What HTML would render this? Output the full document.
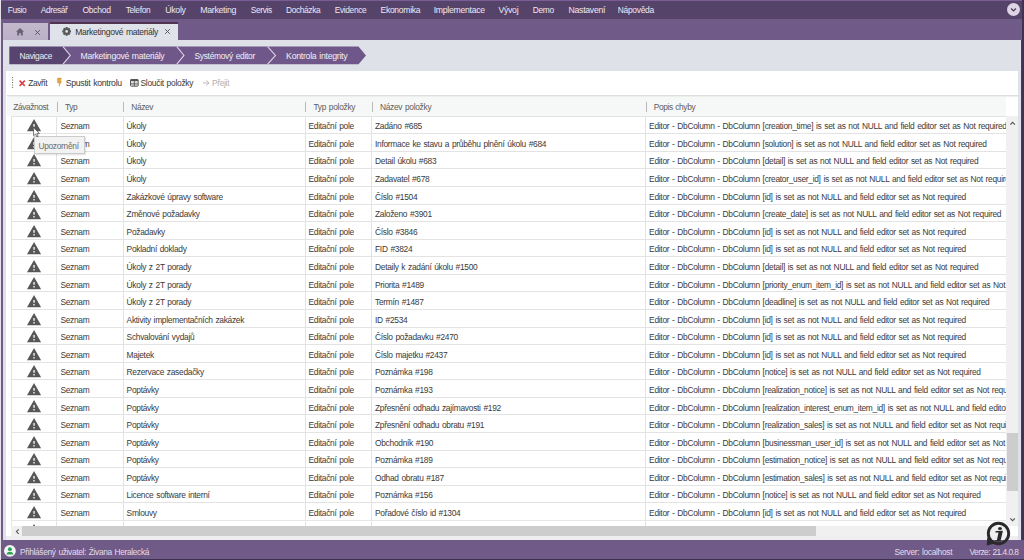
<!DOCTYPE html>
<html><head><meta charset="utf-8"><style>
*{margin:0;padding:0;box-sizing:border-box}
html,body{width:1024px;height:560px;overflow:hidden}
body{position:relative;background:#dee1e8;font-family:"Liberation Sans",sans-serif}
.t{position:absolute;white-space:nowrap;line-height:12px}
.r{position:absolute}
svg{position:absolute;overflow:visible}
</style></head>
<body>
<div class="r" style="left:0.00px;top:0.00px;width:1024.00px;height:560.00px;background:#dee1e8;"></div>
<div class="r" style="left:0.00px;top:0.00px;width:1024.00px;height:1.20px;background:#7a5d96;"></div>
<div class="r" style="left:0.00px;top:1.20px;width:1024.00px;height:17.60px;background:#56436a;"></div>
<div class="r" style="left:0.00px;top:18.80px;width:1024.00px;height:21.50px;background:#705a87;"></div>
<div class="r" style="left:0.00px;top:40.30px;width:3.30px;height:500.20px;background:#705a87;"></div>
<div class="r" style="left:1021.10px;top:40.30px;width:2.90px;height:500.20px;background:#4a3a5e;"></div>
<div class="r" style="left:1022.20px;top:0.00px;width:1.80px;height:560.00px;background:#3f3252;"></div>
<div class="r" style="left:0.00px;top:540.20px;width:1024.00px;height:19.80px;background:#705a87;"></div>
<div class="r" style="left:0.00px;top:558.60px;width:1024.00px;height:1.40px;background:#3e3050;"></div>
<div class="r" style="left:0.00px;top:0.00px;width:1.20px;height:560.00px;background:#e4e2e8;"></div>
<div class="t" style="left:7.75px;top:4px;font-size:8.35px;letter-spacing:-0.349px;word-spacing:0.7px;color:#eee8f2;">Fusio</div>
<div class="t" style="left:40.75px;top:4px;font-size:8.35px;letter-spacing:-0.349px;word-spacing:0.7px;color:#eee8f2;">Adresář</div>
<div class="t" style="left:82.50px;top:4px;font-size:8.57px;letter-spacing:-0.286px;word-spacing:0.7px;color:#eee8f2;">Obchod</div>
<div class="t" style="left:125.75px;top:4px;font-size:8.35px;letter-spacing:-0.349px;word-spacing:0.7px;color:#eee8f2;">Telefon</div>
<div class="t" style="left:165.25px;top:4px;font-size:8.76px;letter-spacing:-0.290px;word-spacing:0.7px;color:#eee8f2;">Úkoly</div>
<div class="t" style="left:200.25px;top:4px;font-size:8.76px;letter-spacing:-0.290px;word-spacing:0.7px;color:#eee8f2;">Marketing</div>
<div class="t" style="left:250.75px;top:4px;font-size:8.35px;letter-spacing:-0.349px;word-spacing:0.7px;color:#eee8f2;">Servis</div>
<div class="t" style="left:286.00px;top:4px;font-size:8.35px;letter-spacing:-0.349px;word-spacing:0.7px;color:#eee8f2;">Docházka</div>
<div class="t" style="left:334.75px;top:4px;font-size:8.35px;letter-spacing:-0.349px;word-spacing:0.7px;color:#eee8f2;">Evidence</div>
<div class="t" style="left:380.50px;top:4px;font-size:8.56px;letter-spacing:-0.286px;word-spacing:0.7px;color:#eee8f2;">Ekonomika</div>
<div class="t" style="left:433.75px;top:4px;font-size:8.68px;letter-spacing:-0.288px;word-spacing:0.7px;color:#eee8f2;">Implementace</div>
<div class="t" style="left:498.50px;top:4px;font-size:8.68px;letter-spacing:-0.288px;word-spacing:0.7px;color:#eee8f2;">Vývoj</div>
<div class="t" style="left:532.75px;top:4px;font-size:8.35px;letter-spacing:-0.282px;word-spacing:0.7px;color:#eee8f2;">Demo</div>
<div class="t" style="left:568.50px;top:4px;font-size:8.72px;letter-spacing:-0.289px;word-spacing:0.7px;color:#eee8f2;">Nastavení</div>
<div class="t" style="left:617.75px;top:4px;font-size:8.44px;letter-spacing:-0.283px;word-spacing:0.7px;color:#eee8f2;">Nápověda</div>
<svg style="left:1007px;top:3px" width="13" height="13" viewBox="0 0 13 13"><circle cx="6.5" cy="6.5" r="6.5" fill="#ddd5e5"/><path d="M4.1 5.5 L6.5 7.9 L8.9 5.5" fill="none" stroke="#4a3d5c" stroke-width="1.3"/></svg>
<div class="r" style="left:3.40px;top:22.80px;width:44.70px;height:17.50px;background:linear-gradient(#c3b9cd,#b9b1c6);"></div>
<svg style="left:16.2px;top:28.4px" width="8" height="7.6" viewBox="0 0 8 7.6"><path d="M4 0 L8 3.8 L6.8 3.8 L6.8 7.6 L4.9 7.6 L4.9 5.3 L3.1 5.3 L3.1 7.6 L1.2 7.6 L1.2 3.8 L0 3.8 Z" fill="#676470"/></svg>
<svg style="left:34px;top:29px" width="7" height="7" viewBox="0 0 7 7"><path d="M1.2 1.2 L5.8 5.8 M5.8 1.2 L1.2 5.8" stroke="#57545c" stroke-width="0.95"/></svg>
<div class="r" style="left:49.80px;top:21.50px;width:128.60px;height:2.00px;background:#4f3450;"></div>
<div class="r" style="left:49.80px;top:23.50px;width:128.60px;height:16.80px;background:#dfe2e8;"></div>
<svg style="left:62.1px;top:27.1px" width="9.3" height="8.8" viewBox="-5 -4.75 10 9.5"><g fill="#575757"><circle r="3.5"/><rect x="-1.15" y="-4.7" width="2.3" height="2.2" rx="0.3" transform="rotate(0)"/><rect x="-1.15" y="-4.7" width="2.3" height="2.2" rx="0.3" transform="rotate(45)"/><rect x="-1.15" y="-4.7" width="2.3" height="2.2" rx="0.3" transform="rotate(90)"/><rect x="-1.15" y="-4.7" width="2.3" height="2.2" rx="0.3" transform="rotate(135)"/><rect x="-1.15" y="-4.7" width="2.3" height="2.2" rx="0.3" transform="rotate(180)"/><rect x="-1.15" y="-4.7" width="2.3" height="2.2" rx="0.3" transform="rotate(225)"/><rect x="-1.15" y="-4.7" width="2.3" height="2.2" rx="0.3" transform="rotate(270)"/><rect x="-1.15" y="-4.7" width="2.3" height="2.2" rx="0.3" transform="rotate(315)"/></g><circle r="1.5" fill="#dfe2e8"/></svg>
<div class="t" style="left:75.25px;top:26px;font-size:8.56px;letter-spacing:-0.286px;word-spacing:0.7px;color:#333;">Marketingové materiály</div>
<svg style="left:164px;top:28px" width="7" height="7" viewBox="0 0 7 7"><path d="M1.2 1.2 L5.8 5.8 M5.8 1.2 L1.2 5.8" stroke="#555" stroke-width="0.95"/></svg>
<svg style="left:0;top:0" width="1024" height="70" viewBox="0 0 1024 70"><polygon points="9.3,46.6 63,46.6 70.3,55.400000000000006 63,64.2 9.3,64.2" fill="#574570"/><polygon points="63,46.6 176.8,46.6 184,55.400000000000006 176.8,64.2 63,64.2 70.3,55.400000000000006" fill="#6f5889"/><polygon points="176.8,46.6 267.6,46.6 275.5,55.400000000000006 267.6,64.2 176.8,64.2 184.0,55.400000000000006" fill="#6f5889"/><polygon points="267.6,46.6 358.5,46.6 366,55.400000000000006 358.5,64.2 267.6,64.2 275.5,55.400000000000006" fill="#6f5889"/><polyline points="63,46.6 70.3,55.400000000000006 63,64.2" fill="none" stroke="#d9cfe4" stroke-width="1.1"/><polyline points="176.8,46.6 184,55.400000000000006 176.8,64.2" fill="none" stroke="#d9cfe4" stroke-width="1.1"/><polyline points="267.6,46.6 275.5,55.400000000000006 267.6,64.2" fill="none" stroke="#d9cfe4" stroke-width="1.1"/></svg>
<div class="t" style="left:19.50px;top:50px;font-size:8.40px;letter-spacing:-0.283px;word-spacing:0.7px;color:#f2eef6;">Navigace</div>
<div class="t" style="left:80.50px;top:50px;font-size:8.66px;letter-spacing:-0.288px;word-spacing:0.7px;color:#f2eef6;">Marketingové materiály</div>
<div class="t" style="left:194.50px;top:50px;font-size:8.40px;letter-spacing:-0.283px;word-spacing:0.7px;color:#f2eef6;">Systémový editor</div>
<div class="t" style="left:286.10px;top:50px;font-size:8.77px;letter-spacing:-0.290px;word-spacing:0.7px;color:#f2eef6;">Kontrola integrity</div>
<div class="r" style="left:5.50px;top:70.90px;width:1012.80px;height:467.60px;background:#ffffff;"></div>
<div class="r" style="left:5.50px;top:536.00px;width:1012.80px;height:4.20px;background:#eeeef0;"></div>
<div class="r" style="left:6.90px;top:94.80px;width:1011.30px;height:2.60px;background:linear-gradient(#d6d6d6,#f4f5f5);"></div>
<svg style="left:11.8px;top:76.8px" width="1.2" height="11.2" viewBox="0 0 1.2 11.2"><rect x="0" y="0" width="1.1" height="1.1" fill="#777"/><rect x="0" y="2.5" width="1.1" height="1.1" fill="#777"/><rect x="0" y="5" width="1.1" height="1.1" fill="#777"/><rect x="0" y="7.5" width="1.1" height="1.1" fill="#777"/><rect x="0" y="10" width="1.1" height="1.1" fill="#777"/></svg>
<svg style="left:18.8px;top:79.7px" width="6.4" height="6.5" viewBox="0 0 6.4 6.5"><path d="M0.6 0.6 L5.8 5.9 M5.8 0.6 L0.6 5.9" stroke="#d8404a" stroke-width="1.5"/></svg>
<div class="t" style="left:28.20px;top:77px;font-size:8.35px;letter-spacing:-0.393px;word-spacing:0.7px;color:#3a3a3a;">Zavřít</div>
<svg style="left:56.7px;top:77.9px" width="4.8" height="8.6" viewBox="0 0 4.8 8.6"><path d="M0.3 0 L4.5 0 L3.5 3 L4.7 3 L2 8.6 L2.2 4.9 L0.4 4.9 Z" fill="#dfa545" stroke="#c98f30" stroke-width="0.3"/></svg>
<div class="t" style="left:65.70px;top:77px;font-size:8.72px;letter-spacing:-0.289px;word-spacing:0.7px;color:#3a3a3a;">Spustit kontrolu</div>
<svg style="left:129.8px;top:78.8px" width="8.7" height="7.7" viewBox="0 0 8.7 7.7"><rect x="0.5" y="0.5" width="7.7" height="6.7" rx="0.8" fill="#e4e4e4" stroke="#555" stroke-width="1"/><rect x="0.5" y="0.5" width="7.7" height="1.6" fill="#555"/><path d="M4.35 1 V7 M0.8 4.9 H7.9" stroke="#555" stroke-width="0.9"/></svg>
<div class="t" style="left:140.50px;top:77px;font-size:8.45px;letter-spacing:-0.284px;word-spacing:0.7px;color:#3a3a3a;">Sloučit položky</div>
<svg style="left:202.6px;top:79.8px" width="6.6" height="6" viewBox="0 0 6.6 6"><path d="M0 3 H6 M3.3 0.4 L6 3 L3.3 5.6" fill="none" stroke="#b4b4b4" stroke-width="0.9"/></svg>
<div class="t" style="left:212.10px;top:77px;font-size:8.35px;letter-spacing:-0.393px;word-spacing:0.7px;color:#b0b0b0;">Přejít</div>
<div class="r" style="left:6.90px;top:97.40px;width:999.30px;height:18.60px;background:#f6f7f7;"></div>
<div class="t" style="left:13.20px;top:101px;font-size:8.35px;letter-spacing:-0.393px;word-spacing:0.7px;color:#5e5e5e;">Závažnost</div>
<div class="t" style="left:64.90px;top:101px;font-size:8.35px;letter-spacing:-0.393px;word-spacing:0.7px;color:#5e5e5e;">Typ</div>
<div class="r" style="left:57.00px;top:101.80px;width:1.00px;height:10.30px;background:#b9b9b9;"></div>
<div class="t" style="left:131.30px;top:101px;font-size:8.35px;letter-spacing:-0.393px;word-spacing:0.7px;color:#5e5e5e;">Název</div>
<div class="r" style="left:123.00px;top:101.80px;width:1.00px;height:10.30px;background:#b9b9b9;"></div>
<div class="t" style="left:313.50px;top:101px;font-size:8.35px;letter-spacing:-0.282px;word-spacing:0.7px;color:#5e5e5e;">Typ položky</div>
<div class="r" style="left:305.00px;top:101.80px;width:1.00px;height:10.30px;background:#b9b9b9;"></div>
<div class="t" style="left:380.00px;top:101px;font-size:8.35px;letter-spacing:-0.282px;word-spacing:0.7px;color:#5e5e5e;">Název položky</div>
<div class="r" style="left:372.00px;top:101.80px;width:1.00px;height:10.30px;background:#b9b9b9;"></div>
<div class="t" style="left:653.80px;top:101px;font-size:8.35px;letter-spacing:-0.393px;word-spacing:0.7px;color:#5e5e5e;">Popis chyby</div>
<div class="r" style="left:646.00px;top:101.80px;width:1.00px;height:10.30px;background:#b9b9b9;"></div>
<div class="r" style="left:11px;top:116px;width:995.2px;height:409.6px;background:#fff;overflow:hidden">
<div class="r" style="left:0.00px;top:-0.40px;width:995.20px;height:1.00px;background:#e3e3e3;"></div>
<div class="t" style="left:49.40px;top:4px;font-size:8.40px;letter-spacing:-0.283px;word-spacing:0.7px;color:#3a3a3a;">Seznam</div>
<div class="t" style="left:115.60px;top:4px;font-size:8.40px;letter-spacing:-0.283px;word-spacing:0.7px;color:#3a3a3a;">Úkoly</div>
<div class="t" style="left:297.50px;top:4px;font-size:8.40px;letter-spacing:-0.283px;word-spacing:0.7px;color:#3a3a3a;">Editační pole</div>
<div class="t" style="left:364.00px;top:4px;font-size:8.40px;letter-spacing:-0.283px;word-spacing:0.7px;color:#3a3a3a;">Zadáno #685</div>
<div class="t" style="left:638.10px;top:4px;font-size:8.40px;letter-spacing:-0.283px;word-spacing:0.7px;color:#3a3a3a;">Editor - DbColumn - DbColumn [creation_time] is set as not NULL and field editor set as Not required</div>
<svg style="left:15.70px;top:3.20px" width="14.1" height="12.3" viewBox="0 0 14.1 12.3"><path d="M7.05 0 L14.1 12.3 L0 12.3 Z" fill="#575757"/><rect x="6.2" y="5" width="1.7" height="2.8" fill="#d8d8d8"/><rect x="6.2" y="9" width="1.7" height="1.5" fill="#d8d8d8"/></svg>
<div class="r" style="left:0.00px;top:17.18px;width:995.20px;height:1.00px;background:#e3e3e3;"></div>
<div class="t" style="left:49.40px;top:22px;font-size:8.40px;letter-spacing:-0.283px;word-spacing:0.7px;color:#3a3a3a;">Seznam</div>
<div class="t" style="left:115.60px;top:22px;font-size:8.40px;letter-spacing:-0.283px;word-spacing:0.7px;color:#3a3a3a;">Úkoly</div>
<div class="t" style="left:297.50px;top:22px;font-size:8.40px;letter-spacing:-0.283px;word-spacing:0.7px;color:#3a3a3a;">Editační pole</div>
<div class="t" style="left:364.00px;top:22px;font-size:8.40px;letter-spacing:-0.283px;word-spacing:0.7px;color:#3a3a3a;">Informace ke stavu a průběhu plnění úkolu #684</div>
<div class="t" style="left:638.10px;top:22px;font-size:8.40px;letter-spacing:-0.283px;word-spacing:0.7px;color:#3a3a3a;">Editor - DbColumn - DbColumn [solution] is set as not NULL and field editor set as Not required</div>
<svg style="left:15.70px;top:20.78px" width="14.1" height="12.3" viewBox="0 0 14.1 12.3"><path d="M7.05 0 L14.1 12.3 L0 12.3 Z" fill="#575757"/><rect x="6.2" y="5" width="1.7" height="2.8" fill="#d8d8d8"/><rect x="6.2" y="9" width="1.7" height="1.5" fill="#d8d8d8"/></svg>
<div class="r" style="left:0.00px;top:34.76px;width:995.20px;height:1.00px;background:#e3e3e3;"></div>
<div class="t" style="left:49.40px;top:39px;font-size:8.40px;letter-spacing:-0.283px;word-spacing:0.7px;color:#3a3a3a;">Seznam</div>
<div class="t" style="left:115.60px;top:39px;font-size:8.40px;letter-spacing:-0.283px;word-spacing:0.7px;color:#3a3a3a;">Úkoly</div>
<div class="t" style="left:297.50px;top:39px;font-size:8.40px;letter-spacing:-0.283px;word-spacing:0.7px;color:#3a3a3a;">Editační pole</div>
<div class="t" style="left:364.00px;top:39px;font-size:8.40px;letter-spacing:-0.283px;word-spacing:0.7px;color:#3a3a3a;">Detail úkolu #683</div>
<div class="t" style="left:638.10px;top:39px;font-size:8.40px;letter-spacing:-0.283px;word-spacing:0.7px;color:#3a3a3a;">Editor - DbColumn - DbColumn [detail] is set as not NULL and field editor set as Not required</div>
<svg style="left:15.70px;top:38.36px" width="14.1" height="12.3" viewBox="0 0 14.1 12.3"><path d="M7.05 0 L14.1 12.3 L0 12.3 Z" fill="#575757"/><rect x="6.2" y="5" width="1.7" height="2.8" fill="#d8d8d8"/><rect x="6.2" y="9" width="1.7" height="1.5" fill="#d8d8d8"/></svg>
<div class="r" style="left:0.00px;top:52.34px;width:995.20px;height:1.00px;background:#e3e3e3;"></div>
<div class="t" style="left:49.40px;top:57px;font-size:8.40px;letter-spacing:-0.283px;word-spacing:0.7px;color:#3a3a3a;">Seznam</div>
<div class="t" style="left:115.60px;top:57px;font-size:8.40px;letter-spacing:-0.283px;word-spacing:0.7px;color:#3a3a3a;">Úkoly</div>
<div class="t" style="left:297.50px;top:57px;font-size:8.40px;letter-spacing:-0.283px;word-spacing:0.7px;color:#3a3a3a;">Editační pole</div>
<div class="t" style="left:364.00px;top:57px;font-size:8.40px;letter-spacing:-0.283px;word-spacing:0.7px;color:#3a3a3a;">Zadavatel #678</div>
<div class="t" style="left:638.10px;top:57px;font-size:8.40px;letter-spacing:-0.283px;word-spacing:0.7px;color:#3a3a3a;">Editor - DbColumn - DbColumn [creator_user_id] is set as not NULL and field editor set as Not required</div>
<svg style="left:15.70px;top:55.94px" width="14.1" height="12.3" viewBox="0 0 14.1 12.3"><path d="M7.05 0 L14.1 12.3 L0 12.3 Z" fill="#575757"/><rect x="6.2" y="5" width="1.7" height="2.8" fill="#d8d8d8"/><rect x="6.2" y="9" width="1.7" height="1.5" fill="#d8d8d8"/></svg>
<div class="r" style="left:0.00px;top:69.92px;width:995.20px;height:1.00px;background:#e3e3e3;"></div>
<div class="t" style="left:49.40px;top:75px;font-size:8.40px;letter-spacing:-0.283px;word-spacing:0.7px;color:#3a3a3a;">Seznam</div>
<div class="t" style="left:115.60px;top:75px;font-size:8.40px;letter-spacing:-0.283px;word-spacing:0.7px;color:#3a3a3a;">Zakázkové úpravy software</div>
<div class="t" style="left:297.50px;top:75px;font-size:8.40px;letter-spacing:-0.283px;word-spacing:0.7px;color:#3a3a3a;">Editační pole</div>
<div class="t" style="left:364.00px;top:75px;font-size:8.40px;letter-spacing:-0.283px;word-spacing:0.7px;color:#3a3a3a;">Číslo #1504</div>
<div class="t" style="left:638.10px;top:75px;font-size:8.40px;letter-spacing:-0.283px;word-spacing:0.7px;color:#3a3a3a;">Editor - DbColumn - DbColumn [id] is set as not NULL and field editor set as Not required</div>
<svg style="left:15.70px;top:73.52px" width="14.1" height="12.3" viewBox="0 0 14.1 12.3"><path d="M7.05 0 L14.1 12.3 L0 12.3 Z" fill="#575757"/><rect x="6.2" y="5" width="1.7" height="2.8" fill="#d8d8d8"/><rect x="6.2" y="9" width="1.7" height="1.5" fill="#d8d8d8"/></svg>
<div class="r" style="left:0.00px;top:87.50px;width:995.20px;height:1.00px;background:#e3e3e3;"></div>
<div class="t" style="left:49.40px;top:92px;font-size:8.40px;letter-spacing:-0.283px;word-spacing:0.7px;color:#3a3a3a;">Seznam</div>
<div class="t" style="left:115.60px;top:92px;font-size:8.40px;letter-spacing:-0.283px;word-spacing:0.7px;color:#3a3a3a;">Změnové požadavky</div>
<div class="t" style="left:297.50px;top:92px;font-size:8.40px;letter-spacing:-0.283px;word-spacing:0.7px;color:#3a3a3a;">Editační pole</div>
<div class="t" style="left:364.00px;top:92px;font-size:8.40px;letter-spacing:-0.283px;word-spacing:0.7px;color:#3a3a3a;">Založeno #3901</div>
<div class="t" style="left:638.10px;top:92px;font-size:8.40px;letter-spacing:-0.283px;word-spacing:0.7px;color:#3a3a3a;">Editor - DbColumn - DbColumn [create_date] is set as not NULL and field editor set as Not required</div>
<svg style="left:15.70px;top:91.10px" width="14.1" height="12.3" viewBox="0 0 14.1 12.3"><path d="M7.05 0 L14.1 12.3 L0 12.3 Z" fill="#575757"/><rect x="6.2" y="5" width="1.7" height="2.8" fill="#d8d8d8"/><rect x="6.2" y="9" width="1.7" height="1.5" fill="#d8d8d8"/></svg>
<div class="r" style="left:0.00px;top:105.08px;width:995.20px;height:1.00px;background:#e3e3e3;"></div>
<div class="t" style="left:49.40px;top:110px;font-size:8.40px;letter-spacing:-0.283px;word-spacing:0.7px;color:#3a3a3a;">Seznam</div>
<div class="t" style="left:115.60px;top:110px;font-size:8.40px;letter-spacing:-0.283px;word-spacing:0.7px;color:#3a3a3a;">Požadavky</div>
<div class="t" style="left:297.50px;top:110px;font-size:8.40px;letter-spacing:-0.283px;word-spacing:0.7px;color:#3a3a3a;">Editační pole</div>
<div class="t" style="left:364.00px;top:110px;font-size:8.40px;letter-spacing:-0.283px;word-spacing:0.7px;color:#3a3a3a;">Číslo #3846</div>
<div class="t" style="left:638.10px;top:110px;font-size:8.40px;letter-spacing:-0.283px;word-spacing:0.7px;color:#3a3a3a;">Editor - DbColumn - DbColumn [id] is set as not NULL and field editor set as Not required</div>
<svg style="left:15.70px;top:108.68px" width="14.1" height="12.3" viewBox="0 0 14.1 12.3"><path d="M7.05 0 L14.1 12.3 L0 12.3 Z" fill="#575757"/><rect x="6.2" y="5" width="1.7" height="2.8" fill="#d8d8d8"/><rect x="6.2" y="9" width="1.7" height="1.5" fill="#d8d8d8"/></svg>
<div class="r" style="left:0.00px;top:122.66px;width:995.20px;height:1.00px;background:#e3e3e3;"></div>
<div class="t" style="left:49.40px;top:127px;font-size:8.40px;letter-spacing:-0.283px;word-spacing:0.7px;color:#3a3a3a;">Seznam</div>
<div class="t" style="left:115.60px;top:127px;font-size:8.40px;letter-spacing:-0.283px;word-spacing:0.7px;color:#3a3a3a;">Pokladní doklady</div>
<div class="t" style="left:297.50px;top:127px;font-size:8.40px;letter-spacing:-0.283px;word-spacing:0.7px;color:#3a3a3a;">Editační pole</div>
<div class="t" style="left:364.00px;top:127px;font-size:8.40px;letter-spacing:-0.283px;word-spacing:0.7px;color:#3a3a3a;">FID #3824</div>
<div class="t" style="left:638.10px;top:127px;font-size:8.40px;letter-spacing:-0.283px;word-spacing:0.7px;color:#3a3a3a;">Editor - DbColumn - DbColumn [id] is set as not NULL and field editor set as Not required</div>
<svg style="left:15.70px;top:126.26px" width="14.1" height="12.3" viewBox="0 0 14.1 12.3"><path d="M7.05 0 L14.1 12.3 L0 12.3 Z" fill="#575757"/><rect x="6.2" y="5" width="1.7" height="2.8" fill="#d8d8d8"/><rect x="6.2" y="9" width="1.7" height="1.5" fill="#d8d8d8"/></svg>
<div class="r" style="left:0.00px;top:140.24px;width:995.20px;height:1.00px;background:#e3e3e3;"></div>
<div class="t" style="left:49.40px;top:145px;font-size:8.40px;letter-spacing:-0.283px;word-spacing:0.7px;color:#3a3a3a;">Seznam</div>
<div class="t" style="left:115.60px;top:145px;font-size:8.40px;letter-spacing:-0.283px;word-spacing:0.7px;color:#3a3a3a;">Úkoly z 2T porady</div>
<div class="t" style="left:297.50px;top:145px;font-size:8.40px;letter-spacing:-0.283px;word-spacing:0.7px;color:#3a3a3a;">Editační pole</div>
<div class="t" style="left:364.00px;top:145px;font-size:8.40px;letter-spacing:-0.283px;word-spacing:0.7px;color:#3a3a3a;">Detaily k zadání úkolu #1500</div>
<div class="t" style="left:638.10px;top:145px;font-size:8.40px;letter-spacing:-0.283px;word-spacing:0.7px;color:#3a3a3a;">Editor - DbColumn - DbColumn [detail] is set as not NULL and field editor set as Not required</div>
<svg style="left:15.70px;top:143.84px" width="14.1" height="12.3" viewBox="0 0 14.1 12.3"><path d="M7.05 0 L14.1 12.3 L0 12.3 Z" fill="#575757"/><rect x="6.2" y="5" width="1.7" height="2.8" fill="#d8d8d8"/><rect x="6.2" y="9" width="1.7" height="1.5" fill="#d8d8d8"/></svg>
<div class="r" style="left:0.00px;top:157.82px;width:995.20px;height:1.00px;background:#e3e3e3;"></div>
<div class="t" style="left:49.40px;top:163px;font-size:8.40px;letter-spacing:-0.283px;word-spacing:0.7px;color:#3a3a3a;">Seznam</div>
<div class="t" style="left:115.60px;top:163px;font-size:8.40px;letter-spacing:-0.283px;word-spacing:0.7px;color:#3a3a3a;">Úkoly z 2T porady</div>
<div class="t" style="left:297.50px;top:163px;font-size:8.40px;letter-spacing:-0.283px;word-spacing:0.7px;color:#3a3a3a;">Editační pole</div>
<div class="t" style="left:364.00px;top:163px;font-size:8.40px;letter-spacing:-0.283px;word-spacing:0.7px;color:#3a3a3a;">Priorita #1489</div>
<div class="t" style="left:638.10px;top:163px;font-size:8.40px;letter-spacing:-0.283px;word-spacing:0.7px;color:#3a3a3a;">Editor - DbColumn - DbColumn [priority_enum_item_id] is set as not NULL and field editor set as Not required</div>
<svg style="left:15.70px;top:161.42px" width="14.1" height="12.3" viewBox="0 0 14.1 12.3"><path d="M7.05 0 L14.1 12.3 L0 12.3 Z" fill="#575757"/><rect x="6.2" y="5" width="1.7" height="2.8" fill="#d8d8d8"/><rect x="6.2" y="9" width="1.7" height="1.5" fill="#d8d8d8"/></svg>
<div class="r" style="left:0.00px;top:175.40px;width:995.20px;height:1.00px;background:#e3e3e3;"></div>
<div class="t" style="left:49.40px;top:180px;font-size:8.40px;letter-spacing:-0.283px;word-spacing:0.7px;color:#3a3a3a;">Seznam</div>
<div class="t" style="left:115.60px;top:180px;font-size:8.40px;letter-spacing:-0.283px;word-spacing:0.7px;color:#3a3a3a;">Úkoly z 2T porady</div>
<div class="t" style="left:297.50px;top:180px;font-size:8.40px;letter-spacing:-0.283px;word-spacing:0.7px;color:#3a3a3a;">Editační pole</div>
<div class="t" style="left:364.00px;top:180px;font-size:8.40px;letter-spacing:-0.283px;word-spacing:0.7px;color:#3a3a3a;">Termín #1487</div>
<div class="t" style="left:638.10px;top:180px;font-size:8.40px;letter-spacing:-0.283px;word-spacing:0.7px;color:#3a3a3a;">Editor - DbColumn - DbColumn [deadline] is set as not NULL and field editor set as Not required</div>
<svg style="left:15.70px;top:179.00px" width="14.1" height="12.3" viewBox="0 0 14.1 12.3"><path d="M7.05 0 L14.1 12.3 L0 12.3 Z" fill="#575757"/><rect x="6.2" y="5" width="1.7" height="2.8" fill="#d8d8d8"/><rect x="6.2" y="9" width="1.7" height="1.5" fill="#d8d8d8"/></svg>
<div class="r" style="left:0.00px;top:192.98px;width:995.20px;height:1.00px;background:#e3e3e3;"></div>
<div class="t" style="left:49.40px;top:198px;font-size:8.40px;letter-spacing:-0.283px;word-spacing:0.7px;color:#3a3a3a;">Seznam</div>
<div class="t" style="left:115.60px;top:198px;font-size:8.40px;letter-spacing:-0.283px;word-spacing:0.7px;color:#3a3a3a;">Aktivity implementačních zakázek</div>
<div class="t" style="left:297.50px;top:198px;font-size:8.40px;letter-spacing:-0.283px;word-spacing:0.7px;color:#3a3a3a;">Editační pole</div>
<div class="t" style="left:364.00px;top:198px;font-size:8.40px;letter-spacing:-0.283px;word-spacing:0.7px;color:#3a3a3a;">ID #2534</div>
<div class="t" style="left:638.10px;top:198px;font-size:8.40px;letter-spacing:-0.283px;word-spacing:0.7px;color:#3a3a3a;">Editor - DbColumn - DbColumn [id] is set as not NULL and field editor set as Not required</div>
<svg style="left:15.70px;top:196.58px" width="14.1" height="12.3" viewBox="0 0 14.1 12.3"><path d="M7.05 0 L14.1 12.3 L0 12.3 Z" fill="#575757"/><rect x="6.2" y="5" width="1.7" height="2.8" fill="#d8d8d8"/><rect x="6.2" y="9" width="1.7" height="1.5" fill="#d8d8d8"/></svg>
<div class="r" style="left:0.00px;top:210.56px;width:995.20px;height:1.00px;background:#e3e3e3;"></div>
<div class="t" style="left:49.40px;top:215px;font-size:8.40px;letter-spacing:-0.283px;word-spacing:0.7px;color:#3a3a3a;">Seznam</div>
<div class="t" style="left:115.60px;top:215px;font-size:8.40px;letter-spacing:-0.283px;word-spacing:0.7px;color:#3a3a3a;">Schvalování vydajů</div>
<div class="t" style="left:297.50px;top:215px;font-size:8.40px;letter-spacing:-0.283px;word-spacing:0.7px;color:#3a3a3a;">Editační pole</div>
<div class="t" style="left:364.00px;top:215px;font-size:8.40px;letter-spacing:-0.283px;word-spacing:0.7px;color:#3a3a3a;">Číslo požadavku #2470</div>
<div class="t" style="left:638.10px;top:215px;font-size:8.40px;letter-spacing:-0.283px;word-spacing:0.7px;color:#3a3a3a;">Editor - DbColumn - DbColumn [id] is set as not NULL and field editor set as Not required</div>
<svg style="left:15.70px;top:214.16px" width="14.1" height="12.3" viewBox="0 0 14.1 12.3"><path d="M7.05 0 L14.1 12.3 L0 12.3 Z" fill="#575757"/><rect x="6.2" y="5" width="1.7" height="2.8" fill="#d8d8d8"/><rect x="6.2" y="9" width="1.7" height="1.5" fill="#d8d8d8"/></svg>
<div class="r" style="left:0.00px;top:228.14px;width:995.20px;height:1.00px;background:#e3e3e3;"></div>
<div class="t" style="left:49.40px;top:233px;font-size:8.40px;letter-spacing:-0.283px;word-spacing:0.7px;color:#3a3a3a;">Seznam</div>
<div class="t" style="left:115.60px;top:233px;font-size:8.40px;letter-spacing:-0.283px;word-spacing:0.7px;color:#3a3a3a;">Majetek</div>
<div class="t" style="left:297.50px;top:233px;font-size:8.40px;letter-spacing:-0.283px;word-spacing:0.7px;color:#3a3a3a;">Editační pole</div>
<div class="t" style="left:364.00px;top:233px;font-size:8.40px;letter-spacing:-0.283px;word-spacing:0.7px;color:#3a3a3a;">Číslo majetku #2437</div>
<div class="t" style="left:638.10px;top:233px;font-size:8.40px;letter-spacing:-0.283px;word-spacing:0.7px;color:#3a3a3a;">Editor - DbColumn - DbColumn [id] is set as not NULL and field editor set as Not required</div>
<svg style="left:15.70px;top:231.74px" width="14.1" height="12.3" viewBox="0 0 14.1 12.3"><path d="M7.05 0 L14.1 12.3 L0 12.3 Z" fill="#575757"/><rect x="6.2" y="5" width="1.7" height="2.8" fill="#d8d8d8"/><rect x="6.2" y="9" width="1.7" height="1.5" fill="#d8d8d8"/></svg>
<div class="r" style="left:0.00px;top:245.72px;width:995.20px;height:1.00px;background:#e3e3e3;"></div>
<div class="t" style="left:49.40px;top:250px;font-size:8.40px;letter-spacing:-0.283px;word-spacing:0.7px;color:#3a3a3a;">Seznam</div>
<div class="t" style="left:115.60px;top:250px;font-size:8.40px;letter-spacing:-0.283px;word-spacing:0.7px;color:#3a3a3a;">Rezervace zasedačky</div>
<div class="t" style="left:297.50px;top:250px;font-size:8.40px;letter-spacing:-0.283px;word-spacing:0.7px;color:#3a3a3a;">Editační pole</div>
<div class="t" style="left:364.00px;top:250px;font-size:8.40px;letter-spacing:-0.283px;word-spacing:0.7px;color:#3a3a3a;">Poznámka #198</div>
<div class="t" style="left:638.10px;top:250px;font-size:8.40px;letter-spacing:-0.283px;word-spacing:0.7px;color:#3a3a3a;">Editor - DbColumn - DbColumn [notice] is set as not NULL and field editor set as Not required</div>
<svg style="left:15.70px;top:249.32px" width="14.1" height="12.3" viewBox="0 0 14.1 12.3"><path d="M7.05 0 L14.1 12.3 L0 12.3 Z" fill="#575757"/><rect x="6.2" y="5" width="1.7" height="2.8" fill="#d8d8d8"/><rect x="6.2" y="9" width="1.7" height="1.5" fill="#d8d8d8"/></svg>
<div class="r" style="left:0.00px;top:263.30px;width:995.20px;height:1.00px;background:#e3e3e3;"></div>
<div class="t" style="left:49.40px;top:268px;font-size:8.40px;letter-spacing:-0.283px;word-spacing:0.7px;color:#3a3a3a;">Seznam</div>
<div class="t" style="left:115.60px;top:268px;font-size:8.40px;letter-spacing:-0.283px;word-spacing:0.7px;color:#3a3a3a;">Poptávky</div>
<div class="t" style="left:297.50px;top:268px;font-size:8.40px;letter-spacing:-0.283px;word-spacing:0.7px;color:#3a3a3a;">Editační pole</div>
<div class="t" style="left:364.00px;top:268px;font-size:8.40px;letter-spacing:-0.283px;word-spacing:0.7px;color:#3a3a3a;">Poznámka #193</div>
<div class="t" style="left:638.10px;top:268px;font-size:8.40px;letter-spacing:-0.283px;word-spacing:0.7px;color:#3a3a3a;">Editor - DbColumn - DbColumn [realization_notice] is set as not NULL and field editor set as Not required</div>
<svg style="left:15.70px;top:266.90px" width="14.1" height="12.3" viewBox="0 0 14.1 12.3"><path d="M7.05 0 L14.1 12.3 L0 12.3 Z" fill="#575757"/><rect x="6.2" y="5" width="1.7" height="2.8" fill="#d8d8d8"/><rect x="6.2" y="9" width="1.7" height="1.5" fill="#d8d8d8"/></svg>
<div class="r" style="left:0.00px;top:280.88px;width:995.20px;height:1.00px;background:#e3e3e3;"></div>
<div class="t" style="left:49.40px;top:286px;font-size:8.40px;letter-spacing:-0.283px;word-spacing:0.7px;color:#3a3a3a;">Seznam</div>
<div class="t" style="left:115.60px;top:286px;font-size:8.40px;letter-spacing:-0.283px;word-spacing:0.7px;color:#3a3a3a;">Poptávky</div>
<div class="t" style="left:297.50px;top:286px;font-size:8.40px;letter-spacing:-0.283px;word-spacing:0.7px;color:#3a3a3a;">Editační pole</div>
<div class="t" style="left:364.00px;top:286px;font-size:8.40px;letter-spacing:-0.283px;word-spacing:0.7px;color:#3a3a3a;">Zpřesnění odhadu zajímavosti #192</div>
<div class="t" style="left:638.10px;top:286px;font-size:8.40px;letter-spacing:-0.283px;word-spacing:0.7px;color:#3a3a3a;">Editor - DbColumn - DbColumn [realization_interest_enum_item_id] is set as not NULL and field editor set as Not required</div>
<svg style="left:15.70px;top:284.48px" width="14.1" height="12.3" viewBox="0 0 14.1 12.3"><path d="M7.05 0 L14.1 12.3 L0 12.3 Z" fill="#575757"/><rect x="6.2" y="5" width="1.7" height="2.8" fill="#d8d8d8"/><rect x="6.2" y="9" width="1.7" height="1.5" fill="#d8d8d8"/></svg>
<div class="r" style="left:0.00px;top:298.46px;width:995.20px;height:1.00px;background:#e3e3e3;"></div>
<div class="t" style="left:49.40px;top:303px;font-size:8.40px;letter-spacing:-0.283px;word-spacing:0.7px;color:#3a3a3a;">Seznam</div>
<div class="t" style="left:115.60px;top:303px;font-size:8.40px;letter-spacing:-0.283px;word-spacing:0.7px;color:#3a3a3a;">Poptávky</div>
<div class="t" style="left:297.50px;top:303px;font-size:8.40px;letter-spacing:-0.283px;word-spacing:0.7px;color:#3a3a3a;">Editační pole</div>
<div class="t" style="left:364.00px;top:303px;font-size:8.40px;letter-spacing:-0.283px;word-spacing:0.7px;color:#3a3a3a;">Zpřesnění odhadu obratu #191</div>
<div class="t" style="left:638.10px;top:303px;font-size:8.40px;letter-spacing:-0.283px;word-spacing:0.7px;color:#3a3a3a;">Editor - DbColumn - DbColumn [realization_sales] is set as not NULL and field editor set as Not required</div>
<svg style="left:15.70px;top:302.06px" width="14.1" height="12.3" viewBox="0 0 14.1 12.3"><path d="M7.05 0 L14.1 12.3 L0 12.3 Z" fill="#575757"/><rect x="6.2" y="5" width="1.7" height="2.8" fill="#d8d8d8"/><rect x="6.2" y="9" width="1.7" height="1.5" fill="#d8d8d8"/></svg>
<div class="r" style="left:0.00px;top:316.04px;width:995.20px;height:1.00px;background:#e3e3e3;"></div>
<div class="t" style="left:49.40px;top:321px;font-size:8.40px;letter-spacing:-0.283px;word-spacing:0.7px;color:#3a3a3a;">Seznam</div>
<div class="t" style="left:115.60px;top:321px;font-size:8.40px;letter-spacing:-0.283px;word-spacing:0.7px;color:#3a3a3a;">Poptávky</div>
<div class="t" style="left:297.50px;top:321px;font-size:8.40px;letter-spacing:-0.283px;word-spacing:0.7px;color:#3a3a3a;">Editační pole</div>
<div class="t" style="left:364.00px;top:321px;font-size:8.40px;letter-spacing:-0.283px;word-spacing:0.7px;color:#3a3a3a;">Obchodník #190</div>
<div class="t" style="left:638.10px;top:321px;font-size:8.40px;letter-spacing:-0.283px;word-spacing:0.7px;color:#3a3a3a;">Editor - DbColumn - DbColumn [businessman_user_id] is set as not NULL and field editor set as Not required</div>
<svg style="left:15.70px;top:319.64px" width="14.1" height="12.3" viewBox="0 0 14.1 12.3"><path d="M7.05 0 L14.1 12.3 L0 12.3 Z" fill="#575757"/><rect x="6.2" y="5" width="1.7" height="2.8" fill="#d8d8d8"/><rect x="6.2" y="9" width="1.7" height="1.5" fill="#d8d8d8"/></svg>
<div class="r" style="left:0.00px;top:333.62px;width:995.20px;height:1.00px;background:#e3e3e3;"></div>
<div class="t" style="left:49.40px;top:338px;font-size:8.40px;letter-spacing:-0.283px;word-spacing:0.7px;color:#3a3a3a;">Seznam</div>
<div class="t" style="left:115.60px;top:338px;font-size:8.40px;letter-spacing:-0.283px;word-spacing:0.7px;color:#3a3a3a;">Poptávky</div>
<div class="t" style="left:297.50px;top:338px;font-size:8.40px;letter-spacing:-0.283px;word-spacing:0.7px;color:#3a3a3a;">Editační pole</div>
<div class="t" style="left:364.00px;top:338px;font-size:8.40px;letter-spacing:-0.283px;word-spacing:0.7px;color:#3a3a3a;">Poznámka #189</div>
<div class="t" style="left:638.10px;top:338px;font-size:8.40px;letter-spacing:-0.283px;word-spacing:0.7px;color:#3a3a3a;">Editor - DbColumn - DbColumn [estimation_notice] is set as not NULL and field editor set as Not required</div>
<svg style="left:15.70px;top:337.22px" width="14.1" height="12.3" viewBox="0 0 14.1 12.3"><path d="M7.05 0 L14.1 12.3 L0 12.3 Z" fill="#575757"/><rect x="6.2" y="5" width="1.7" height="2.8" fill="#d8d8d8"/><rect x="6.2" y="9" width="1.7" height="1.5" fill="#d8d8d8"/></svg>
<div class="r" style="left:0.00px;top:351.20px;width:995.20px;height:1.00px;background:#e3e3e3;"></div>
<div class="t" style="left:49.40px;top:356px;font-size:8.40px;letter-spacing:-0.283px;word-spacing:0.7px;color:#3a3a3a;">Seznam</div>
<div class="t" style="left:115.60px;top:356px;font-size:8.40px;letter-spacing:-0.283px;word-spacing:0.7px;color:#3a3a3a;">Poptávky</div>
<div class="t" style="left:297.50px;top:356px;font-size:8.40px;letter-spacing:-0.283px;word-spacing:0.7px;color:#3a3a3a;">Editační pole</div>
<div class="t" style="left:364.00px;top:356px;font-size:8.40px;letter-spacing:-0.283px;word-spacing:0.7px;color:#3a3a3a;">Odhad obratu #187</div>
<div class="t" style="left:638.10px;top:356px;font-size:8.40px;letter-spacing:-0.283px;word-spacing:0.7px;color:#3a3a3a;">Editor - DbColumn - DbColumn [estimation_sales] is set as not NULL and field editor set as Not required</div>
<svg style="left:15.70px;top:354.80px" width="14.1" height="12.3" viewBox="0 0 14.1 12.3"><path d="M7.05 0 L14.1 12.3 L0 12.3 Z" fill="#575757"/><rect x="6.2" y="5" width="1.7" height="2.8" fill="#d8d8d8"/><rect x="6.2" y="9" width="1.7" height="1.5" fill="#d8d8d8"/></svg>
<div class="r" style="left:0.00px;top:368.78px;width:995.20px;height:1.00px;background:#e3e3e3;"></div>
<div class="t" style="left:49.40px;top:373px;font-size:8.40px;letter-spacing:-0.283px;word-spacing:0.7px;color:#3a3a3a;">Seznam</div>
<div class="t" style="left:115.60px;top:373px;font-size:8.40px;letter-spacing:-0.283px;word-spacing:0.7px;color:#3a3a3a;">Licence software interní</div>
<div class="t" style="left:297.50px;top:373px;font-size:8.40px;letter-spacing:-0.283px;word-spacing:0.7px;color:#3a3a3a;">Editační pole</div>
<div class="t" style="left:364.00px;top:373px;font-size:8.40px;letter-spacing:-0.283px;word-spacing:0.7px;color:#3a3a3a;">Poznámka #156</div>
<div class="t" style="left:638.10px;top:373px;font-size:8.40px;letter-spacing:-0.283px;word-spacing:0.7px;color:#3a3a3a;">Editor - DbColumn - DbColumn [notice] is set as not NULL and field editor set as Not required</div>
<svg style="left:15.70px;top:372.38px" width="14.1" height="12.3" viewBox="0 0 14.1 12.3"><path d="M7.05 0 L14.1 12.3 L0 12.3 Z" fill="#575757"/><rect x="6.2" y="5" width="1.7" height="2.8" fill="#d8d8d8"/><rect x="6.2" y="9" width="1.7" height="1.5" fill="#d8d8d8"/></svg>
<div class="r" style="left:0.00px;top:386.36px;width:995.20px;height:1.00px;background:#e3e3e3;"></div>
<div class="t" style="left:49.40px;top:391px;font-size:8.40px;letter-spacing:-0.283px;word-spacing:0.7px;color:#3a3a3a;">Seznam</div>
<div class="t" style="left:115.60px;top:391px;font-size:8.40px;letter-spacing:-0.283px;word-spacing:0.7px;color:#3a3a3a;">Smlouvy</div>
<div class="t" style="left:297.50px;top:391px;font-size:8.40px;letter-spacing:-0.283px;word-spacing:0.7px;color:#3a3a3a;">Editační pole</div>
<div class="t" style="left:364.00px;top:391px;font-size:8.40px;letter-spacing:-0.283px;word-spacing:0.7px;color:#3a3a3a;">Pořadové číslo id #1304</div>
<div class="t" style="left:638.10px;top:391px;font-size:8.40px;letter-spacing:-0.283px;word-spacing:0.7px;color:#3a3a3a;">Editor - DbColumn - DbColumn [id] is set as not NULL and field editor set as Not required</div>
<svg style="left:15.70px;top:389.96px" width="14.1" height="12.3" viewBox="0 0 14.1 12.3"><path d="M7.05 0 L14.1 12.3 L0 12.3 Z" fill="#575757"/><rect x="6.2" y="5" width="1.7" height="2.8" fill="#d8d8d8"/><rect x="6.2" y="9" width="1.7" height="1.5" fill="#d8d8d8"/></svg>
<div class="r" style="left:0.00px;top:403.94px;width:995.20px;height:1.00px;background:#e3e3e3;"></div>
<svg style="left:15.70px;top:407.54px" width="14.1" height="12.3" viewBox="0 0 14.1 12.3"><path d="M7.05 0 L14.1 12.3 L0 12.3 Z" fill="#575757"/><rect x="6.2" y="5" width="1.7" height="2.8" fill="#d8d8d8"/><rect x="6.2" y="9" width="1.7" height="1.5" fill="#d8d8d8"/></svg>
<div class="r" style="left:0.00px;top:403.94px;width:995.20px;height:1.00px;background:#e6e6e6;"></div>
<div class="r" style="left:0.00px;top:0.00px;width:1.00px;height:420.00px;background:#e3e3e3;"></div>
<div class="r" style="left:45.00px;top:0.00px;width:1.00px;height:420.00px;background:#e3e3e3;"></div>
<div class="r" style="left:112.00px;top:0.00px;width:1.00px;height:420.00px;background:#e3e3e3;"></div>
<div class="r" style="left:294.00px;top:0.00px;width:1.00px;height:420.00px;background:#e3e3e3;"></div>
<div class="r" style="left:360.00px;top:0.00px;width:1.00px;height:420.00px;background:#e3e3e3;"></div>
<div class="r" style="left:634.00px;top:0.00px;width:1.00px;height:420.00px;background:#e3e3e3;"></div>
</div>
<div class="r" style="left:1006.20px;top:116.00px;width:11.80px;height:409.60px;background:#f0f0f0;"></div>
<div class="r" style="left:1007.40px;top:433.40px;width:10.20px;height:57.60px;background:#cdcdcd;"></div>
<svg style="left:1010px;top:121.5px" width="5.2" height="3" viewBox="0 0 5.2 3"><path d="M0.3 2.7 L2.6 0.4 L4.9 2.7" fill="none" stroke="#575757" stroke-width="1.15"/></svg>
<svg style="left:1010.1px;top:518.4px" width="5.2" height="3" viewBox="0 0 5.2 3"><path d="M0.3 0.3 L2.6 2.6 L4.9 0.3" fill="none" stroke="#575757" stroke-width="1.15"/></svg>
<div class="r" style="left:11.00px;top:525.60px;width:995.20px;height:10.50px;background:#f0f0f0;"></div>
<div class="r" style="left:22.30px;top:526.00px;width:793.70px;height:9.70px;background:#cdcdcd;"></div>
<svg style="left:15.6px;top:529.1px" width="3" height="5.2" viewBox="0 0 3 5.2"><path d="M2.7 0.3 L0.4 2.6 L2.7 4.9" fill="none" stroke="#575757" stroke-width="1.15"/></svg>
<div class="r" style="left:34.00px;top:136.00px;width:51.00px;height:17.60px;background:#f2f2f2;border:1px solid #cbcbcb;box-shadow:1px 1px 1.5px rgba(0,0,0,0.12)"></div>
<div class="t" style="left:38.40px;top:140px;font-size:8.35px;letter-spacing:-0.282px;word-spacing:0.7px;color:#6c6c6c;">Upozornění</div>
<svg style="left:33px;top:127.3px" width="7" height="10.5" viewBox="0 0 6 9"><path d="M0.5 0.5 L0.5 7.5 L2.2 6 L3.4 8.5 L4.4 8 L3.3 5.6 L5.5 5.6 Z" fill="#fff" stroke="#333" stroke-width="0.55"/></svg>
<svg style="left:984px;top:520px" width="30" height="28" viewBox="0 0 30 28"><circle cx="14.5" cy="13.5" r="10.2" fill="none" stroke="#2a2a2a" stroke-width="2.9"/><path d="M3.2 17.5 L2.8 25.6 L10.5 23.6 L8 20.5 Z" fill="#2a2a2a"/><ellipse cx="16" cy="8.6" rx="2" ry="1.5" fill="#2a2a2a"/><path d="M11.6 11.0 L18.9 10.7 L16.7 20.2 L17.0 21.5 L11.2 21.6 L11.4 20.3 L12.9 20.2 L14.5 12.5 L11.5 12.6 Z" fill="#2a2a2a"/></svg>
<svg style="left:3.5px;top:545.1px" width="11.8" height="11.8" viewBox="0 0 12 12"><circle cx="6" cy="6" r="6" fill="#f4f4f4"/><circle cx="6" cy="4.2" r="2" fill="#2aa05a"/><path d="M2.6 9.6 Q2.8 6.8 6 6.8 Q9.2 6.8 9.4 9.6 Z" fill="#2aa05a"/></svg>
<div class="t" style="left:20.00px;top:546px;font-size:8.35px;letter-spacing:-0.327px;word-spacing:0.7px;color:#e4ddeb;">Přihlášený uživatel: Živana Heralecká</div>
<div class="t" style="left:894.50px;top:546px;font-size:8.35px;letter-spacing:-0.305px;word-spacing:0.7px;color:#e4ddeb;">Server: localhost</div>
<div class="t" style="left:969.50px;top:546px;font-size:8.35px;letter-spacing:-0.526px;word-spacing:0.7px;color:#e4ddeb;">Verze: 21.4.0.8</div>

</body></html>
